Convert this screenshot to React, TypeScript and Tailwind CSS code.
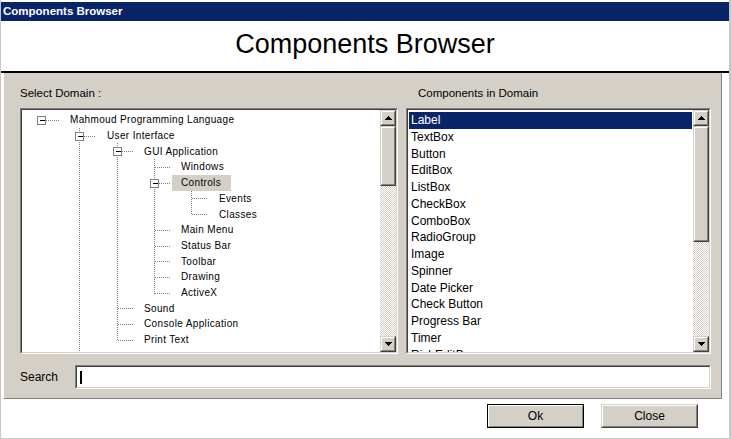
import React from "react";

type Node = { level: number; label: string; box?: boolean; selected?: boolean };

const tree: Node[] = [
  { level: 0, label: "Mahmoud Programming Language", box: true },
  { level: 1, label: "User Interface", box: true },
  { level: 2, label: "GUI Application", box: true },
  { level: 3, label: "Windows" },
  { level: 3, label: "Controls", box: true, selected: true },
  { level: 4, label: "Events" },
  { level: 4, label: "Classes" },
  { level: 3, label: "Main Menu" },
  { level: 3, label: "Status Bar" },
  { level: 3, label: "Toolbar" },
  { level: 3, label: "Drawing" },
  { level: 3, label: "ActiveX" },
  { level: 2, label: "Sound" },
  { level: 2, label: "Console Application" },
  { level: 2, label: "Print Text" },
];

const components = [
  "Label",
  "TextBox",
  "Button",
  "EditBox",
  "ListBox",
  "CheckBox",
  "ComboBox",
  "RadioGroup",
  "Image",
  "Spinner",
  "Date Picker",
  "Check Button",
  "Progress Bar",
  "Timer",
  "RichEditBox",
];

const XC = [19, 57, 95, 132, 169];
const TX = [48, 85, 122, 159, 197];
const ROW = 15.71;
const center = (i: number) => Math.round(2 + ROW * i + ROW / 2) + 0.5;
const top = (i: number) => Math.round(2 + ROW * i);

function Raised({ className, children }: { className: string; children?: React.ReactNode }) {
  return (
    <div
      className={`border border-t-[#d4d0c8] border-l-[#d4d0c8] border-r-[#404040] border-b-[#404040] bg-[#d4d0c8] ${className}`}
    >
      <div className="w-full h-full border border-t-white border-l-white border-r-[#808080] border-b-[#808080] flex items-center justify-center">
        {children}
      </div>
    </div>
  );
}

function Sunken({ className, children }: { className: string; children?: React.ReactNode }) {
  return (
    <div
      className={`border border-t-[#808080] border-l-[#808080] border-r-white border-b-white ${className}`}
    >
      <div className="w-full h-full border border-t-[#404040] border-l-[#404040] border-r-[#d4d0c8] border-b-[#d4d0c8] overflow-hidden">
        {children}
      </div>
    </div>
  );
}

function Arrow({ up }: { up?: boolean }) {
  return (
    <svg width="7" height="4" viewBox="0 0 7 4" shapeRendering="crispEdges">
      {up ? (
        <polygon points="3.5,0 7,4 0,4" fill="#000" />
      ) : (
        <polygon points="0,0 7,0 3.5,4" fill="#000" />
      )}
    </svg>
  );
}

function ScrollBar({ thumb }: { thumb: string }) {
  return (
    <div className="w-[16px] h-full flex flex-col shrink-0">
      <Raised className="h-[16px] w-[16px] shrink-0">
        <Arrow up />
      </Raised>
      <Raised className={`w-[16px] shrink-0 ${thumb}`} />
      <div className="flex-1 bg-[image:repeating-conic-gradient(#d4d0c8_0%_25%,#ffffff_0%_50%)] bg-[length:2px_2px]" />
      <Raised className="h-[16px] w-[16px] shrink-0">
        <Arrow />
      </Raised>
    </div>
  );
}

function TreeLines() {
  const dot = { stroke: "#808080", strokeWidth: 1, strokeDasharray: "1 1" };
  return (
    <svg className="absolute left-0 top-0" width="358" height="242" shapeRendering="crispEdges">
      {/* vertical sibling lines */}
      <line x1={XC[1] + 0.5} y1={top(1)} x2={XC[1] + 0.5} y2={242} {...dot} />
      <line x1={XC[2] + 0.5} y1={top(2)} x2={XC[2] + 0.5} y2={center(14)} {...dot} />
      <line x1={XC[3] + 0.5} y1={top(3)} x2={XC[3] + 0.5} y2={center(11)} {...dot} />
      <line x1={XC[4] + 0.5} y1={top(5)} x2={XC[4] + 0.5} y2={center(6)} {...dot} />
      {tree.map((n, i) => (
        <line
          key={"h" + i}
          x1={XC[n.level] + (n.box ? 5 : 1)}
          y1={center(i)}
          x2={TX[n.level] - 11}
          y2={center(i)}
          {...dot}
        />
      ))}
      {tree.map((n, i) =>
        n.box ? (
          <g key={"b" + i}>
            <rect
              x={XC[n.level] - 3.5}
              y={center(i) - 4}
              width="8"
              height="8"
              fill="#fff"
              stroke="#808080"
            />
            <line
              x1={XC[n.level] - 1}
              y1={center(i)}
              x2={XC[n.level] + 4}
              y2={center(i)}
              stroke="#000"
            />
          </g>
        ) : null
      )}
    </svg>
  );
}

export default function App() {
  return (
    <div className="w-[731px] h-[439px] bg-white flex flex-col overflow-hidden border-l border-l-[#c8c8c8] border-r-2 border-r-[#c8c8c8] border-b border-b-[#c8c8c8] font-['Liberation_Sans',Arial,sans-serif] text-black">
      <div className="h-[2px] shrink-0" />
      <div className="h-[19px] shrink-0 bg-[#0a246a] text-white font-bold text-[11.5px] leading-[19px] pl-[2px]">
        Components Browser
      </div>
      <div className="h-[50px] shrink-0 flex items-center justify-center text-[27px] pb-[3px]">
        Components Browser
      </div>
      <div className="h-[2px] shrink-0 bg-black" />
      <div className="ml-[3px] w-[718px] h-[326px] shrink-0 bg-[#d4d0c8] border-r border-b border-r-[#808080] border-b-[#808080] flex flex-col pl-[16px]">
        <div className="h-[15px] mt-[13px] flex text-[11.5px] leading-[15px]">
          <div className="w-[386px]">Select Domain :</div>
          <div className="pl-[12px]">Components in Domain</div>
        </div>
        <div className="mt-[7px] flex gap-[8px] h-[246px]">
          <Sunken className="w-[378px] h-full">
            <div className="flex h-full">
              <div className="flex-1 relative bg-white overflow-hidden">
                <TreeLines />
                <div className="relative pt-[2px] font-['Liberation_Sans',Arial,sans-serif] text-[10px] tracking-[0.35px]">
                  {tree.map((n, i) => (
                    <div
                      key={i}
                      className="h-[15.71px] flex items-center"
                      style={{ paddingLeft: TX[n.level] }}
                    >
                      {n.selected ? (
                        <span className="bg-[#d4d0c8] -ml-[9px] pl-[9px] pr-[10px] h-[16px] leading-[16px]">
                          {n.label}
                        </span>
                      ) : (
                        <span className="leading-[15px]">{n.label}</span>
                      )}
                    </div>
                  ))}
                </div>
              </div>
              <ScrollBar thumb="h-[60px]" />
            </div>
          </Sunken>
          <Sunken className="w-[305px] h-full">
            <div className="flex h-full">
              <div className="flex-1 bg-white overflow-hidden pt-[2px] px-[1px] text-[12px]">
                {components.map((c, i) => (
                  <div
                    key={c}
                    className={`h-[16.77px] leading-[16.77px] pl-[2px] ${
                      i === 0 ? "bg-[#0a246a] text-white" : ""
                    }`}
                  >
                    {c}
                  </div>
                ))}
              </div>
              <ScrollBar thumb="h-[116px]" />
            </div>
          </Sunken>
        </div>
        <div className="mt-[11px] flex items-center h-[24px]">
          <div className="w-[55px] text-[12px] pl-[0px]">Search</div>
          <Sunken className="w-[636px] h-full">
            <div className="w-full h-full bg-white flex items-center pl-[3px]">
              <div className="w-[2px] h-[13px] bg-black" />
            </div>
          </Sunken>
        </div>
      </div>
      <div className="flex pl-[486px] pt-[5px] gap-[17px]">
        <div className="w-[97px] h-[24px] border border-black">
          <div className="w-full h-full border border-t-white border-l-white border-r-[#808080] border-b-[#808080] bg-[#d4d0c8] flex items-center justify-center text-[12px]">
            Ok
          </div>
        </div>
        <Raised className="w-[97px] h-[24px]">
          <span className="text-[12px]">Close</span>
        </Raised>
      </div>
    </div>
  );
}
